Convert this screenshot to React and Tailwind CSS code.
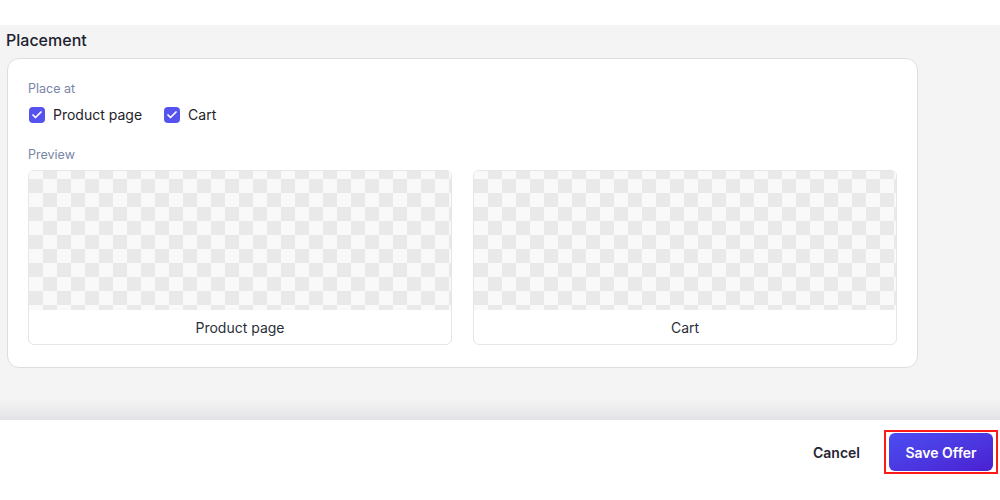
import { Check } from 'lucide-react';

const font = { fontFamily: 'Inter, "Noto Sans", sans-serif' };

function Box({ label }) {
  return (
    <div className="flex-1 rounded-md border border-[#e6e6e6] overflow-hidden bg-white">
      <div className="h-[139px] bg-[#f9f9f9] bg-[conic-gradient(#e9e9e9_25%,#f9f9f9_0_50%,#e9e9e9_0_75%,#f9f9f9_0)] bg-[length:28px_28px] bg-[position:0_-6px]" />
      <div className="h-[34px] flex items-center justify-center text-[14px] text-[#2b2f3a]">{label}</div>
    </div>
  );
}

function CheckItem({ label }) {
  return (
    <label className="flex items-center gap-2 text-[14px] text-[#1f2229]">
      <span className="w-4 h-4 rounded-[4px] bg-[#5552ee] flex items-center justify-center">
        <Check className="w-3 h-3 text-white" strokeWidth={3.5} />
      </span>
      {label}
    </label>
  );
}

export default function App() {
  return (
    <div className="w-[1000px] h-[500px] bg-white flex flex-col overflow-hidden" style={font}>
      <div className="h-[25px] bg-white" />
      <div className="flex-1 bg-[#f4f4f4] px-[7px] pt-[5px] relative">
        <h2 className="text-[16px] font-medium text-[#1d2230] leading-5 -ml-px">Placement</h2>
        <div className="mt-[8px] w-[911px] h-[310px] rounded-xl border border-[#dedede] bg-white px-5 pt-[22px]">
          <div className="text-[12.5px] text-[#7985a6] leading-4">Place at</div>
          <div className="mt-[7px] flex items-center gap-[22px] pl-px">
            <CheckItem label="Product page" />
            <CheckItem label="Cart" />
          </div>
          <div className="mt-[22px] text-[12.5px] text-[#7985a6] leading-4">Preview</div>
          <div className="mt-[7px] flex gap-[21px] w-[869px]">
            <Box label="Product page" />
            <Box label="Cart" />
          </div>
        </div>
        <div className="absolute left-0 right-0 bottom-0 h-[20px] bg-gradient-to-b from-transparent to-[#e4e4e8]" />
      </div>
      <div className="h-[81px] bg-white border-t border-[#e2e2e6] flex items-start justify-end pt-[10px] pr-[2px] gap-[24px]">
        <button className="h-[44px] text-[14px] font-semibold text-[#1f2433]">Cancel</button>
        <div className="border-2 border-[#ff1a1a] px-[3px] py-px">
          <button className="h-[38px] w-[104px] rounded-md bg-gradient-to-br from-[#4b4df2] to-[#4a1fd0] text-white text-[14px] font-semibold">
            Save Offer
          </button>
        </div>
      </div>
    </div>
  );
}
